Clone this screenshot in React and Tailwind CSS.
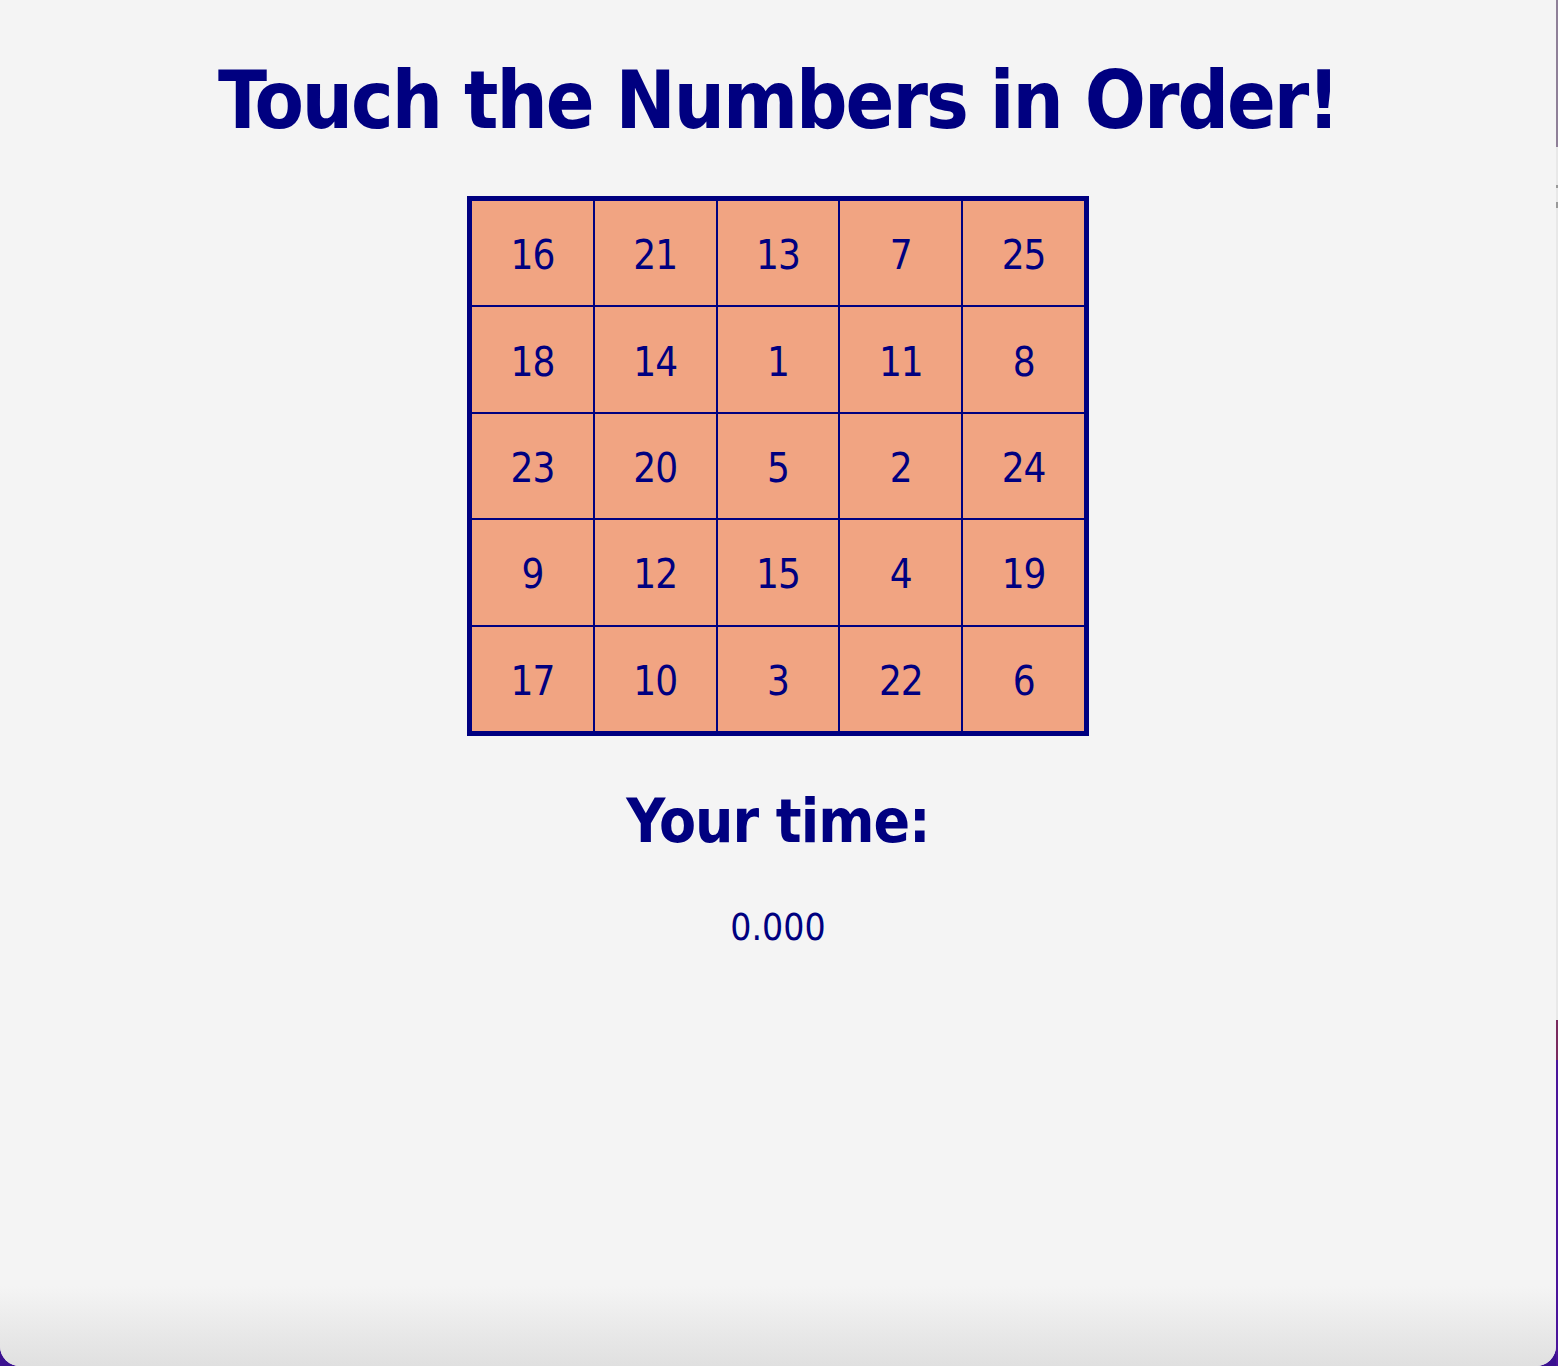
import React from "react";

const rows = [
  [16, 21, 13, 7, 25],
  [18, 14, 1, 11, 8],
  [23, 20, 5, 2, 24],
  [9, 12, 15, 4, 19],
  [17, 10, 3, 22, 6],
];

const font = { fontFamily: '"DejaVu Sans Condensed", "DejaVu Sans", sans-serif' };

export default function App() {
  return (
    <div className="w-[1558px] h-[1366px] bg-[#3b1190] flex overflow-hidden">
      <div
        className="w-[1556px] h-[1366px] bg-[#f4f4f4] rounded-b-[20px] flex flex-col items-center text-[#000080] relative overflow-hidden"
        style={font}
      >
        <h1 className="pt-[51px] text-[80px] leading-[100px] font-bold tracking-[-2px]">Touch the Numbers in Order!</h1>
        <div className="mt-[45px] border-[4px] border-[#000080] grid grid-cols-5 w-[622px]">
          {rows.flat().map((n, i) => (
            <div
              key={i}
              className="h-[106.4px] pt-[4px] border border-[#000080] bg-[#f1a482] flex items-center justify-center text-[40px] leading-none tracking-[-1px]"
            >
              {n}
            </div>
          ))}
        </div>
        <h2 className="mt-[55px] text-[60px] leading-[60px] font-bold tracking-[-1px]">Your time:</h2>
        <div className="mt-[58px] text-[37px] leading-[37px]">0.000</div>
        <div className="absolute left-0 right-0 bottom-0 h-[80px] bg-gradient-to-b from-[#f4f4f4] to-[#e0e0e0]" />
      </div>
      <div className="w-[2px] h-[1366px] flex flex-col">
        <div className="h-[147px] bg-[#8f8098]" />
        <div className="h-[38px] bg-[#e8e8e8]" />
        <div className="h-[3px] bg-[#9a9a9a]" />
        <div className="h-[14px] bg-[#e8e8e8]" />
        <div className="h-[6px] bg-[#9a9a9a]" />
        <div className="h-[812px] bg-[#e8e8e8]" />
        <div className="h-[40px] bg-[#7a2a5e]" />
        <div className="flex-1 bg-[#4a149a]" />
      </div>
    </div>
  );
}
